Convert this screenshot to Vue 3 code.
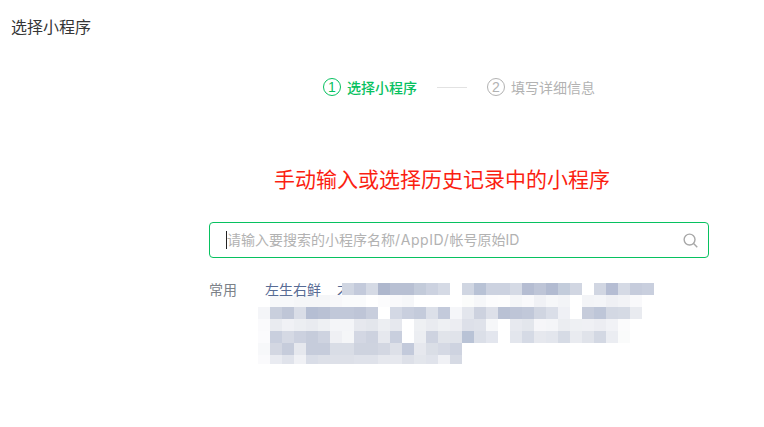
<script setup>
const rows = [
  [null,null,null,null,null,null,null,'d0d6e2','c3cadb','d5dae5','aeb7cd','b8c0d3','b8c0d3','c3cbda','ccd2e0','d5dae5',null,'d0d6e2','b8c2d5','ccd2e0','ccd2e0','d5dae5','b5bdd2','bec5d7','b2bbd1','c3ccdb','d1d6e2',null,'d1d6e2','b5bdd3','d5dae5','c6ccdc','c9cfde'],
  [null,'f7f8fa','f7f8fa','f5f6f8','f5f6f8','f5f6f8','f8f8fa','fafbfc','fafbfc',null,'fcfcfd','f9f9fb','f6f7f9',null,null,null,null,'fbfcfb','f6f7f9','fcfcfd','fdfdfd','f5f6f8','f9f9fb','f0f1f5','f6f7f9','f3f4f7',null,'f3f4f7','f4f5f8','eff0f4','f2f3f6','f9f9fb',null],
  ['f4f5f8','c9cfdd','bfc6d7','d9dde7','b5bed3','b9c1d4','c1c8d9','c1c8d9','bec5d7','c8cedd',null,'d3d8e4','c9cfde','c4cbdb','dce0e9','c3cadb','f5f6f9','e3e6ed','cdd2df','dde0e9','b9c1d4','bec5d7','c1c8d9','d0d5e1','dadee8','eff0f5',null,'c6ccdb','bec6d8','d3d8e3','d5dae4','e9ebf0',null],
  ['fafafc','e9ebf0','f0f1f5','eceef2','e9ebf0','eef0f3','f4f5f8','f4f5f8','e6e8ee','e3e6ec','eceef2','e6e8ee',null,'eef0f3','e9ebf0','eef0f3','ecedf2','dde0e9','dfe2ea','f6f7f9',null,'e7e9ef','e3e6ec','f6f6f9','f4f5f8','ebedf1','eef0f3','eff0f4','ecedf2','f1f2f6','fbfbfc',null,null],
  ['fbfbfd','c9cfde','d5d9e4','ccd1df','c6ccdb','ced3e0','eff0f4','f5f6f8','d3d7e3','cdd2df','e6e8ee','c9cfde',null,'eceef2','ced3e0','e1e4ea','e0e3ea','b9c3d6','dbdfe8','e3e6ee',null,'e3e6ed','d5dae5','e6e8ee','e3e6ed','d6dbe5','e9ebf0','e0e3ea','d3d8e3','ebedf2','fafbfb',null,null],
  ['f7f8fa','d3d7e2','c6ccdb','e6e8ee','c6ccdb','c6ccdb','d9dde6','d9dde6','ced3df','ced3df','d3d7e2','dde0e8','c3cadb','e6e8ee','dadee6','d5d9e4','ced3e0'],
  ['fafafc','e9ebf1','e0e3eb','f0f1f5','d9dde7','dde0e8','dde0e8','dde0e8','dfe2ea','dfe2ea','e6e8ee','e6e8ee','dde0e8','e3e6ec','e0e3eb','f0f1f5','d6dae4']
]
const cells = rows.flatMap((row, r) =>
  row.map((c, i) => ({ key: r + '-' + i, col: i + 1, row: r + 1, color: c ? '#' + c : 'transparent' }))
)
</script>

<template>
  <div class="page">
    <h1 class="title">选择小程序</h1>

    <div class="steps">
      <div class="step active"><span class="num">1</span><span class="label">选择小程序</span></div>
      <span class="line"></span>
      <div class="step"><span class="num">2</span><span class="label">填写详细信息</span></div>
    </div>

    <h2 class="heading">手动输入或选择历史记录中的小程序</h2>

    <div class="content">
      <div class="search">
        <span class="caret"></span>
        <span class="placeholder">请输入要搜索的小程序名称<span class="latin">/AppID/</span>帐号原始ID</span>
        <svg class="icon" viewBox="0 0 16 16" width="15" height="15" fill="none" stroke="#a8a8a8" stroke-width="1.5">
          <circle cx="7" cy="7" r="5.8" />
          <path d="M11.3 11.3 15.2 15.2" />
        </svg>
      </div>

      <div class="recent">
        <span class="recent-label">常用</span>
        <span class="recent-name first">左生右鲜</span>
        <span class="recent-name next">才</span>
        <div class="mosaic">
          <i
            v-for="c in cells"
            :key="c.key"
            :style="{ gridColumn: c.col, gridRow: c.row, background: c.color }"
          ></i>
        </div>
      </div>
    </div>
  </div>
</template>

<style scoped>
.page {
  width: 764px;
  height: 427px;
  overflow: hidden;
  background: #fff;
  font-family: "Noto Sans CJK SC", "Liberation Sans", sans-serif;
}
.title {
  margin: 0;
  padding: 16px 0 0 11px;
  font-size: 16px;
  line-height: 20px;
  font-weight: 400;
  color: #353535;
}
.steps {
  display: flex;
  align-items: center;
  margin: 41px 0 0 323px;
  height: 20px;
}
.step {
  display: flex;
  align-items: center;
  gap: 6px;
  color: #b2b2b2;
}
.step.active {
  color: #07c160;
}
.num {
  box-sizing: border-box;
  width: 18px;
  height: 18px;
  border: 1px solid currentColor;
  border-radius: 50%;
  display: flex;
  align-items: center;
  justify-content: center;
  font-family: "Liberation Sans", sans-serif;
  font-size: 14px;
  line-height: 1;
}
.label {
  font-size: 14px;
  line-height: 20px;
}
.active .label {
  font-weight: 500;
}
.line {
  width: 30px;
  height: 1px;
  background: #e2e2e2;
  margin: 0 20px;
}
.heading {
  margin: 0;
  padding-top: 67px;
  width: 884px;
  text-align: center;
  font-size: 21px;
  line-height: 28px;
  font-weight: 400;
  color: #fb1f12;
}
.content {
  width: 500px;
  margin: 30px 0 0 209px;
}
.search {
  box-sizing: border-box;
  height: 36px;
  border: 1px solid #07c160;
  border-radius: 4px;
  display: flex;
  align-items: center;
  padding: 0 16px;
}
.caret {
  width: 1px;
  height: 18px;
  background: #222;
}
.placeholder {
  flex: 1;
  font-family: Inter, "Noto Sans CJK SC", sans-serif;
  font-size: 14px;
  color: #b2b2b2;
  line-height: 20px;
}
.latin {
  letter-spacing: 0.6px;
}
.icon {
  margin-right: -6px;
}
.recent {
  position: relative;
  display: flex;
  margin-top: 22px;
  font-size: 14px;
  line-height: 18px;
}
.recent-label {
  width: 56px;
  color: #7c8289;
}
.recent-name {
  color: #576b95;
}
.first {
  position: relative;
  z-index: 1;
}
.next {
  margin-left: 16px;
}
.mosaic {
  position: absolute;
  left: 49px;
  top: 3px;
  display: grid;
  grid-template-columns: repeat(33, 12px);
  grid-template-rows: repeat(6, 12px) 9px;
}
</style>
